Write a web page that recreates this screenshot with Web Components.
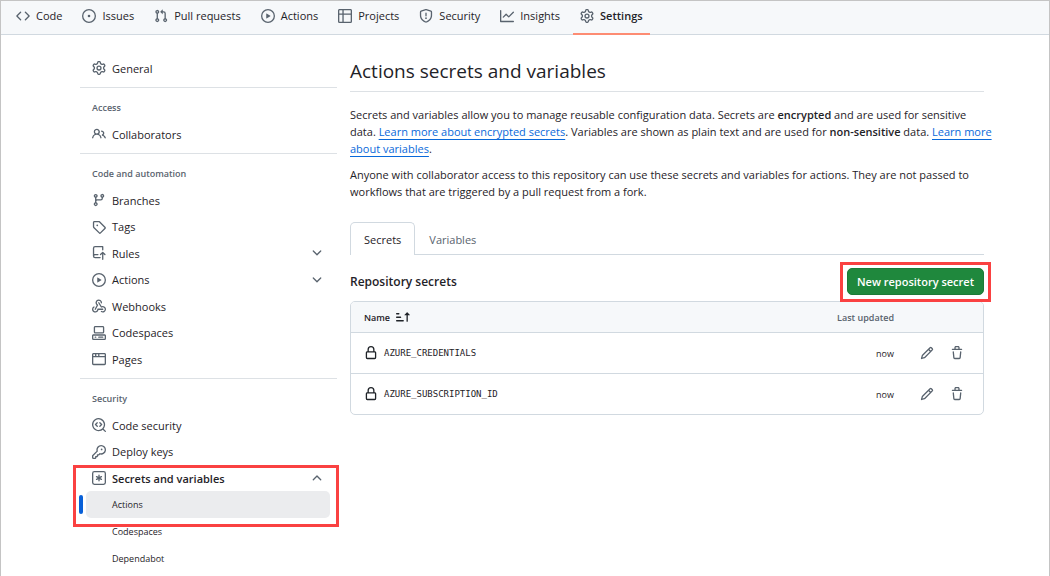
<!DOCTYPE html>
<html lang="en">
<head>
<meta charset="utf-8">
<meta name="viewport" content="width=device-width, initial-scale=1">
<title>Actions secrets and variables</title>
<style>
  :root {
    --fg: #1f2328;
    --muted: #59636e;
    --line: #d1d9e0;
    --subtle: #f6f8fa;
    --link: #0969da;
    --mark: #fa4141;
  }
  body {
    margin: 0;
    font: 11px/17px "Open Sans", "Noto Sans", sans-serif;
    color: var(--fg);
    background: #fff;
  }
</style>
</head>
<body>
<settings-page>
  <top-nav slot="top">
    <nav-tab icon="code">Code</nav-tab>
    <nav-tab icon="issue">Issues</nav-tab>
    <nav-tab icon="pull">Pull requests</nav-tab>
    <nav-tab icon="play">Actions</nav-tab>
    <nav-tab icon="table">Projects</nav-tab>
    <nav-tab icon="shield">Security</nav-tab>
    <nav-tab icon="graph">Insights</nav-tab>
    <nav-tab icon="gear" current>Settings</nav-tab>
  </top-nav>
  <side-nav slot="side">
    <side-group>
      <side-item icon="gear">General</side-item>
    </side-group>
    <side-group heading="Access">
      <side-item icon="people">Collaborators</side-item>
    </side-group>
    <side-group heading="Code and automation">
      <side-item icon="branch">Branches</side-item>
      <side-item icon="tag">Tags</side-item>
      <side-item icon="push" toggle="closed">Rules</side-item>
      <side-item icon="play" toggle="closed">Actions</side-item>
      <side-item icon="webhook">Webhooks</side-item>
      <side-item icon="codespaces">Codespaces</side-item>
      <side-item icon="browser">Pages</side-item>
    </side-group>
    <side-group heading="Security">
      <side-item icon="codescan">Code security</side-item>
      <side-item icon="key">Deploy keys</side-item>
      <mark-box class="wide">
        <side-item icon="asterisk" toggle="open">Secrets and variables</side-item>
        <side-item sub current>Actions</side-item>
      </mark-box>
      <side-item sub>Codespaces</side-item>
      <side-item sub>Dependabot</side-item>
    </side-group>
  </side-nav>
  <secrets-panel></secrets-panel>
</settings-page>

<script>
const ICONS = {
  code: 'M4.72 3.22a.75.75 0 0 1 1.06 1.06L2.06 8l3.72 3.72a.75.75 0 1 1-1.06 1.06L.47 8.53a.75.75 0 0 1 0-1.06zm6.56 0a.75.75 0 1 0-1.06 1.06L13.94 8l-3.72 3.72a.75.75 0 1 0 1.06 1.06l4.25-4.25a.75.75 0 0 0 0-1.06z',
  issue: 'M8 9.5a1.5 1.5 0 1 0 0-3 1.5 1.5 0 0 0 0 3ZM8 0a8 8 0 1 1 0 16A8 8 0 0 1 8 0ZM1.5 8a6.5 6.5 0 1 0 13 0 6.5 6.5 0 0 0-13 0Z',
  pull: 'M1.5 3.25a2.25 2.25 0 1 1 3 2.122v5.256a2.251 2.251 0 1 1-1.5 0V5.372A2.25 2.25 0 0 1 1.5 3.25Zm5.677-.177L9.573.677A.25.25 0 0 1 10 .854V2.5h1A2.5 2.5 0 0 1 13.5 5v5.628a2.251 2.251 0 1 1-1.5 0V5a1 1 0 0 0-1-1h-1v1.646a.25.25 0 0 1-.427.177L7.177 3.427a.25.25 0 0 1 0-.354ZM3.75 2.5a.75.75 0 1 0 0 1.5.75.75 0 0 0 0-1.5Zm0 9.5a.75.75 0 1 0 0 1.5.75.75 0 0 0 0-1.5Zm8.25.75a.75.75 0 1 0 1.5 0 .75.75 0 0 0-1.5 0Z',
  play: 'M8 0a8 8 0 1 1 0 16A8 8 0 0 1 8 0ZM1.5 8a6.5 6.5 0 1 0 13 0 6.5 6.5 0 0 0-13 0Zm4.879-2.773 4.264 2.559a.25.25 0 0 1 0 .428l-4.264 2.559A.25.25 0 0 1 6 10.559V5.442a.25.25 0 0 1 .379-.215Z',
  table: 'M0 1.75C0 .784.784 0 1.75 0h12.5C15.216 0 16 .784 16 1.75v12.5A1.75 1.75 0 0 1 14.25 16H1.75A1.75 1.75 0 0 1 0 14.25ZM6.5 6.5v8h7.75a.25.25 0 0 0 .25-.25V6.5Zm8-1.5V1.75a.25.25 0 0 0-.25-.25H6.5V5Zm-13 1.5v7.75c0 .138.112.25.25.25H5v-8ZM5 5V1.5H1.75a.25.25 0 0 0-.25.25V5Z',
  shield: 'M7.467.133a1.748 1.748 0 0 1 1.066 0l5.25 1.68A1.75 1.75 0 0 1 15 3.48V7c0 1.566-.32 3.182-1.303 4.682-.983 1.498-2.585 2.813-5.032 3.855a1.697 1.697 0 0 1-1.33 0c-2.447-1.042-4.049-2.357-5.032-3.855C1.32 10.182 1 8.566 1 7V3.48a1.75 1.75 0 0 1 1.217-1.667Zm.61 1.429a.25.25 0 0 0-.153 0l-5.25 1.68a.25.25 0 0 0-.174.238V7c0 1.358.275 2.666 1.057 3.86.784 1.194 2.121 2.34 4.366 3.297a.196.196 0 0 0 .154 0c2.245-.956 3.582-2.104 4.366-3.298C13.225 9.666 13.5 8.36 13.5 7V3.48a.251.251 0 0 0-.174-.237l-5.25-1.68ZM8.75 4.75v3a.75.75 0 0 1-1.5 0v-3a.75.75 0 0 1 1.5 0ZM9 10.5a1 1 0 1 1-2 0 1 1 0 0 1 2 0Z',
  graph: 'M1.5 1.75V13.5h13.75a.75.75 0 0 1 0 1.5H.75a.75.75 0 0 1-.75-.75V1.75a.75.75 0 0 1 1.5 0Zm14.28 2.53-5.25 5.25a.75.75 0 0 1-1.06 0L7 7.06 4.28 9.78a.751.751 0 0 1-1.042-.018.751.751 0 0 1-.018-1.042l3.25-3.25a.75.75 0 0 1 1.06 0L10 7.94l4.72-4.72a.751.751 0 0 1 1.042.018.751.751 0 0 1 .018 1.042Z',
  gear: 'M8 0a8.2 8.2 0 0 1 .701.031C9.444.095 9.99.645 10.16 1.29l.288 1.107c.018.066.079.158.212.224.231.114.454.243.668.386.123.082.233.09.299.071l1.103-.303c.644-.176 1.392.021 1.82.63.27.385.506.792.704 1.218.315.675.111 1.422-.364 1.891l-.814.806c-.049.048-.098.147-.088.294.016.257.016.515 0 .772-.01.147.038.246.088.294l.814.806c.475.469.679 1.216.364 1.891a7.977 7.977 0 0 1-.704 1.217c-.428.61-1.176.807-1.82.63l-1.102-.302c-.067-.019-.177-.011-.3.071a5.909 5.909 0 0 1-.668.386c-.133.066-.194.158-.211.224l-.29 1.106c-.168.646-.715 1.196-1.458 1.26a8.006 8.006 0 0 1-1.402 0c-.743-.064-1.289-.614-1.458-1.26l-.289-1.106c-.018-.066-.079-.158-.212-.224a5.738 5.738 0 0 1-.668-.386c-.123-.082-.233-.09-.299-.071l-1.103.303c-.644.176-1.392-.021-1.82-.63a8.12 8.12 0 0 1-.704-1.218c-.315-.675-.111-1.422.363-1.891l.815-.806c.05-.048.098-.147.088-.294a6.214 6.214 0 0 1 0-.772c.01-.147-.038-.246-.088-.294l-.815-.806C.635 6.045.431 5.298.746 4.623a7.92 7.92 0 0 1 .704-1.217c.428-.61 1.176-.807 1.82-.63l1.102.302c.067.019.177.011.3-.071.214-.143.437-.272.668-.386.133-.066.194-.158.211-.224l.29-1.106C6.009.645 6.556.095 7.299.03 7.53.01 7.764 0 8 0Zm-.571 1.525c-.036.003-.108.036-.137.146l-.289 1.105c-.147.561-.549.967-.998 1.189-.173.086-.34.183-.5.29-.417.278-.97.423-1.529.27l-1.103-.303c-.109-.03-.175.016-.195.045-.22.312-.412.644-.573.99-.014.031-.021.11.059.19l.815.806c.411.406.562.957.53 1.456a4.709 4.709 0 0 0 0 .582c.032.499-.119 1.05-.53 1.456l-.815.806c-.081.08-.073.159-.059.19.162.346.353.677.573.989.02.03.085.076.195.046l1.102-.303c.56-.153 1.113-.008 1.53.27.161.107.328.204.501.29.447.222.85.629.997 1.189l.289 1.105c.029.109.101.143.137.146a6.6 6.6 0 0 0 1.142 0c.036-.003.108-.036.137-.146l.289-1.105c.147-.561.549-.967.998-1.189.173-.086.34-.183.5-.29.417-.278.97-.423 1.529-.27l1.103.303c.109.029.175-.016.195-.045.22-.313.411-.644.573-.99.014-.031.021-.11-.059-.19l-.815-.806c-.411-.406-.562-.957-.53-1.456a4.709 4.709 0 0 0 0-.582c-.032-.499.119-1.05.53-1.456l.815-.806c.081-.08.073-.159.059-.19a6.464 6.464 0 0 0-.573-.989c-.02-.03-.085-.076-.195-.046l-1.102.303c-.56.153-1.113.008-1.53-.27a4.44 4.44 0 0 0-.501-.29c-.447-.222-.85-.629-.997-1.189l-.289-1.105c-.029-.11-.101-.143-.137-.146a6.6 6.6 0 0 0-1.142 0ZM11 8a3 3 0 1 1-6 0 3 3 0 0 1 6 0ZM9.5 8a1.5 1.5 0 1 0-3.001.001A1.5 1.5 0 0 0 9.5 8Z',
  people: 'M2 5.5a3.5 3.5 0 1 1 5.898 2.549 5.508 5.508 0 0 1 3.034 4.084.75.75 0 1 1-1.482.235 4 4 0 0 0-7.9 0 .75.75 0 0 1-1.482-.236A5.507 5.507 0 0 1 3.102 8.05 3.493 3.493 0 0 1 2 5.5ZM11 4a3.001 3.001 0 0 1 2.22 5.018 5.01 5.01 0 0 1 2.56 3.012.749.749 0 0 1-.885.954.752.752 0 0 1-.549-.514 3.507 3.507 0 0 0-2.522-2.372.75.75 0 0 1-.574-.73v-.352a.75.75 0 0 1 .416-.672A1.5 1.5 0 0 0 11 5.5.75.75 0 0 1 11 4Zm-5.5-.5a2 2 0 1 0-.001 3.999A2 2 0 0 0 5.5 3.5Z',
  branch: 'M9.5 3.25a2.25 2.25 0 1 1 3 2.122V6A2.5 2.5 0 0 1 10 8.5H6a1 1 0 0 0-1 1v1.128a2.251 2.251 0 1 1-1.5 0V5.372a2.25 2.25 0 1 1 1.5 0v1.836A2.493 2.493 0 0 1 6 7h4a1 1 0 0 0 1-1v-.628A2.25 2.25 0 0 1 9.5 3.25Zm-6 0a.75.75 0 1 0 1.5 0 .75.75 0 0 0-1.5 0Zm8.25-.75a.75.75 0 1 0 0 1.5.75.75 0 0 0 0-1.5ZM4.25 12a.75.75 0 1 0 0 1.5.75.75 0 0 0 0-1.5Z',
  tag: 'M1 7.775V2.75C1 1.784 1.784 1 2.75 1h5.025c.464 0 .91.184 1.238.513l6.25 6.25a1.75 1.75 0 0 1 0 2.474l-5.026 5.026a1.75 1.75 0 0 1-2.474 0l-6.25-6.25A1.752 1.752 0 0 1 1 7.775Zm1.5 0c0 .066.026.13.073.177l6.25 6.25a.25.25 0 0 0 .354 0l5.025-5.025a.25.25 0 0 0 0-.354l-6.25-6.25a.25.25 0 0 0-.177-.073H2.75a.25.25 0 0 0-.25.25ZM6 5a1 1 0 1 1 0 2 1 1 0 0 1 0-2Z',
  push: 'M1 2.5A2.5 2.5 0 0 1 3.5 0h8.75a.75.75 0 0 1 .75.75v3.5a.75.75 0 0 1-1.5 0V1.5h-8a1 1 0 0 0-1 1v6.708A2.493 2.493 0 0 1 3.5 9h3.25a.75.75 0 0 1 0 1.5H3.5a1 1 0 0 0 0 2h5.75a.75.75 0 0 1 0 1.5H3.5A2.5 2.5 0 0 1 1 11.5Zm13.23 7.79-1.224-1.224v6.184a.75.75 0 0 1-1.5 0V9.066L10.28 10.29a.75.75 0 0 1-1.06-1.061l2.505-2.504a.75.75 0 0 1 1.06 0L15.29 9.23a.751.751 0 0 1-.018 1.042.751.751 0 0 1-1.042.018Z',
  webhook: 'M5.5 4.25a2.25 2.25 0 0 1 4.5 0 .75.75 0 0 0 1.5 0 3.75 3.75 0 1 0-6.14 2.889l-2.272 4.258a.75.75 0 0 0 1.324.706L7 7.25a.75.75 0 0 0-.309-1.015A2.25 2.25 0 0 1 5.5 4.25ZM7.364 3.607a.75.75 0 0 1 1.03.257l2.608 4.349a3.75 3.75 0 1 1-.628 6.785.75.75 0 0 1 .752-1.299 2.25 2.25 0 1 0-.033-3.88.75.75 0 0 1-1.03-.256L7.107 4.636a.75.75 0 0 1 .257-1.03ZM2.9 8.776A.75.75 0 0 1 2.625 9.8 2.25 2.25 0 1 0 6 11.75a.75.75 0 0 1 .75-.751h5.5a.75.75 0 0 1 0 1.5H7.425a3.751 3.751 0 1 1-5.55-3.998.75.75 0 0 1 1.024.274Z',
  codespaces: 'M0 11.25c0-.966.784-1.75 1.75-1.75h12.5c.966 0 1.75.784 1.75 1.75v3A1.75 1.75 0 0 1 14.25 16H1.75A1.75 1.75 0 0 1 0 14.25Zm2-9.5C2 .784 2.784 0 3.75 0h8.5C13.216 0 14 .784 14 1.75v5a1.75 1.75 0 0 1-1.75 1.75h-8.5A1.75 1.75 0 0 1 2 6.75Zm1.75-.25a.25.25 0 0 0-.25.25v5c0 .138.112.25.25.25h8.5a.25.25 0 0 0 .25-.25v-5a.25.25 0 0 0-.25-.25Zm-2 9.5a.25.25 0 0 0-.25.25v3c0 .138.112.25.25.25h12.5a.25.25 0 0 0 .25-.25v-3a.25.25 0 0 0-.25-.25ZM7 12.75a.75.75 0 0 1 .75-.75h4.5a.75.75 0 0 1 0 1.5h-4.5a.75.75 0 0 1-.75-.75Zm-4 0a.75.75 0 0 1 .75-.75h.5a.75.75 0 0 1 0 1.5h-.5a.75.75 0 0 1-.75-.75Z',
  browser: 'M0 2.75C0 1.784.784 1 1.75 1h12.5c.966 0 1.75.784 1.75 1.75v10.5A1.75 1.75 0 0 1 14.25 15H1.75A1.75 1.75 0 0 1 0 13.25ZM14.5 6h-13v7.25c0 .138.112.25.25.25h12.5a.25.25 0 0 0 .25-.25Zm-6-3.5v2h6V2.75a.25.25 0 0 0-.25-.25ZM5 2.5v2h2v-2Zm-3.25 0a.25.25 0 0 0-.25.25V4.5h2v-2Z',
  codescan: 'M8.47 4.97a.75.75 0 0 0 0 1.06L9.94 7.5 8.47 8.97a.75.75 0 1 0 1.06 1.06l2-2a.75.75 0 0 0 0-1.06l-2-2a.75.75 0 0 0-1.06 0ZM6.53 6.03a.75.75 0 0 0-1.06-1.06l-2 2a.75.75 0 0 0 0 1.06l2 2a.75.75 0 1 0 1.06-1.06L5.06 7.5l1.47-1.47ZM12.246 13.307a7.501 7.501 0 1 1 1.06-1.06l2.474 2.473a.749.749 0 1 1-1.06 1.06l-2.474-2.473ZM1.5 7.5a6.002 6.002 0 0 0 3.608 5.504 6.002 6.002 0 0 0 6.486-1.117.748.748 0 0 1 .292-.293A6 6 0 1 0 1.5 7.5Z',
  key: 'M10.5 0a5.499 5.499 0 1 1-1.288 10.848l-.932.932a.749.749 0 0 1-.53.22H7v.75a.749.749 0 0 1-.22.53l-.5.5a.749.749 0 0 1-.53.22H5v.75a.749.749 0 0 1-.22.53l-.5.5a.749.749 0 0 1-.53.22h-2A1.75 1.75 0 0 1 0 14.25v-2c0-.199.079-.389.22-.53l4.932-4.932A5.5 5.5 0 0 1 10.5 0Zm-4 5.5c-.001.431.069.86.205 1.269a.75.75 0 0 1-.181.768L1.5 12.56v1.69c0 .138.112.25.25.25h1.69l.06-.06v-1.19a.75.75 0 0 1 .75-.75h1.19l.06-.06v-1.19a.75.75 0 0 1 .75-.75h1.19l1.023-1.025a.75.75 0 0 1 .768-.18A4 4 0 1 0 6.5 5.5ZM11 6a1 1 0 1 1 0-2 1 1 0 0 1 0 2Z',
  asterisk: 'M0 2.75A2.75 2.75 0 0 1 2.75 0h10.5A2.75 2.75 0 0 1 16 2.75v10.5A2.75 2.75 0 0 1 13.25 16H2.75A2.75 2.75 0 0 1 0 13.25ZM2.75 1.5c-.69 0-1.25.56-1.25 1.25v10.5c0 .69.56 1.25 1.25 1.25h10.5c.69 0 1.25-.56 1.25-1.25V2.75c0-.69-.56-1.25-1.25-1.25ZM8 4a.75.75 0 0 1 .75.75V6.7l1.69-.975a.75.75 0 0 1 .75 1.3L9.5 8l1.69.976a.75.75 0 0 1-.75 1.298L8.75 9.3v1.951a.75.75 0 0 1-1.5 0V9.299l-1.69.976a.75.75 0 0 1-.75-1.3L6.5 8l-1.69-.975a.75.75 0 0 1 .75-1.3l1.69.976V4.75A.75.75 0 0 1 8 4Z',
  lock: 'M4 4a4 4 0 0 1 8 0v2h.25c.966 0 1.75.784 1.75 1.75v5.5A1.75 1.75 0 0 1 12.25 15h-8.5A1.75 1.75 0 0 1 2 13.25v-5.5C2 6.784 2.784 6 3.75 6H4Zm8.25 3.5h-8.5a.25.25 0 0 0-.25.25v5.5c0 .138.112.25.25.25h8.5a.25.25 0 0 0 .25-.25v-5.5a.25.25 0 0 0-.25-.25ZM10.5 6V4a2.5 2.5 0 1 0-5 0v2Z',
  pencil: 'M11.013 1.427a1.75 1.75 0 0 1 2.474 0l1.086 1.086a1.75 1.75 0 0 1 0 2.474l-8.61 8.61c-.21.21-.47.364-.756.445l-3.251.93a.75.75 0 0 1-.927-.928l.929-3.25c.081-.286.235-.547.445-.758l8.61-8.61Zm.176 4.823L9.75 4.81l-6.286 6.287a.253.253 0 0 0-.064.108l-.558 1.953 1.953-.558a.253.253 0 0 0 .108-.064Zm1.238-3.763a.25.25 0 0 0-.354 0L10.811 3.75l1.439 1.44 1.263-1.263a.25.25 0 0 0 0-.354Z',
  trash: 'M11 1.75V3h2.25a.75.75 0 0 1 0 1.5H2.75a.75.75 0 0 1 0-1.5H5V1.75C5 .784 5.784 0 6.75 0h2.5C10.216 0 11 .784 11 1.75ZM4.496 6.675l.66 6.6a.25.25 0 0 0 .249.225h5.19a.25.25 0 0 0 .249-.225l.66-6.6a.75.75 0 0 1 1.492.149l-.66 6.6A1.748 1.748 0 0 1 10.595 15h-5.19a1.75 1.75 0 0 1-1.741-1.575l-.66-6.6a.75.75 0 1 1 1.492-.15ZM6.5 1.75V3h3V1.75a.25.25 0 0 0-.25-.25h-2.5a.25.25 0 0 0-.25.25Z',
  down: 'M12.78 5.22a.749.749 0 0 1 0 1.06l-4.25 4.25a.749.749 0 0 1-1.06 0L3.22 6.28a.749.749 0 1 1 1.06-1.06L8 8.939l3.72-3.719a.749.749 0 0 1 1.06 0Z',
  up: 'M3.22 10.53a.749.749 0 0 1 0-1.06l4.25-4.25a.749.749 0 0 1 1.06 0l4.25 4.25a.749.749 0 1 1-1.06 1.06L8 6.811 4.28 10.53a.749.749 0 0 1-1.06 0Z',
  sort: 'm12.927 2.573 3 3A.25.25 0 0 1 15.75 6H13.5v6.75a.75.75 0 0 1-1.5 0V6H9.75a.25.25 0 0 1-.177-.427l3-3a.25.25 0 0 1 .354 0ZM0 12.25a.75.75 0 0 1 .75-.75h7.5a.75.75 0 0 1 0 1.5H.75a.75.75 0 0 1-.75-.75Zm0-4a.75.75 0 0 1 .75-.75h4.5a.75.75 0 0 1 0 1.5H.75A.75.75 0 0 1 0 8.25Zm0-4a.75.75 0 0 1 .75-.75h2.5a.75.75 0 0 1 0 1.5H.75A.75.75 0 0 1 0 4.25Z'
};

/* Registers an element whose shadow root is filled from a render function. */
function define(name, render) {
  customElements.define(name, class extends HTMLElement {
    constructor() {
      super();
      this.attachShadow({ mode: 'open' });
    }
    connectedCallback() {
      this.shadowRoot.innerHTML = render(this);
    }
  });
}

define('ui-icon', el => `
  <style>
    :host { display: block; flex: none; width: 14px; height: 14px; color: var(--muted); }
    svg { display: block; width: 100%; height: 100%; fill: currentColor; }
  </style>
  <svg viewBox="0 0 16 16" aria-hidden="true"><path fill-rule="evenodd" d="${ICONS[el.getAttribute('name')]}"/></svg>`);

/* Red outline drawn over the content it wraps. */
define('mark-box', () => `
  <style>
    :host { display: block; position: relative; }
    :host::after {
      content: ""; position: absolute; inset: -6px -7px -7px;
      border: 3px solid var(--mark); pointer-events: none;
    }
    :host(.wide)::after { inset: 0 -2px -9px -7px; }
  </style>
  <slot></slot>`);

define('settings-page', () => `
  <style>
    :host { display: block; box-sizing: border-box; min-height: 100vh; border: 1px solid #c4c4c4; }
    .body {
      display: grid; grid-template-columns: 257px minmax(0, 1fr); gap: 13px;
      padding: 20px 65px 0 79px;
    }
  </style>
  <slot name="top"></slot>
  <div class="body"><slot name="side"></slot><slot></slot></div>`);

define('top-nav', () => `
  <style>
    :host { display: block; background: var(--subtle); border-bottom: 1px solid var(--line); }
    nav { display: flex; gap: 6px; padding: 0 8px; }
  </style>
  <nav aria-label="Repository"><slot></slot></nav>`);

define('nav-tab', el => `
  <style>
    :host { display: block; }
    a {
      display: flex; align-items: center; gap: 6px; height: 29px; padding: 0 7px 4px;
      color: inherit; text-decoration: none; white-space: nowrap; position: relative;
    }
    :host([current]) a { font-weight: 600; }
    :host([current]) a::after {
      content: ""; position: absolute; inset: auto 0 -1px; height: 2px; background: #fd8c73;
    }
  </style>
  <a href="#" ${el.hasAttribute('current') ? 'aria-current="page"' : ''}><ui-icon name="${el.getAttribute('icon')}"></ui-icon><span><slot></slot></span></a>`);

define('side-nav', () => `
  <style>:host { display: block; } nav { display: block; }</style>
  <nav aria-label="Settings"><slot></slot></nav>`);

define('side-group', el => `
  <style>
    :host { display: block; padding-bottom: 6px; }
    :host(:not(:first-child)) { border-top: 1px solid #dde1e5; padding-top: 7px; }
    h2 {
      margin: 0; padding-left: 12px; line-height: 26px;
      font-size: 9px; font-weight: 600; color: var(--muted);
    }
    ::slotted(side-item:nth-child(even)) { height: 27px; }
  </style>
  ${el.hasAttribute('heading') ? `<h2>${el.getAttribute('heading')}</h2>` : ''}
  <slot></slot>`);

define('side-item', el => {
  const toggle = el.getAttribute('toggle');
  const icon = el.getAttribute('icon');
  const inner = `${icon ? `<ui-icon name="${icon}"></ui-icon>` : ''}<span><slot></slot></span>`;
  return `
  <style>
    :host { display: flex; position: relative; height: 26px; }
    a, button {
      flex: 1; display: flex; align-items: center; gap: 6px;
      margin: 0 7px 0 6px; padding: 0 6px; border: 0; border-radius: 5px; background: none;
      font: inherit; color: inherit; text-align: left; text-decoration: none;
    }
    span { flex: 1; }
    :host([sub]) a { padding-left: 26px; font-size: 9px; }
    :host([toggle="open"]) button { font-weight: 600; }
    :host([current]) { height: 27px; }
    :host([current]) a { background: #ebecee; }
    :host([current])::before {
      content: ""; position: absolute; left: -1px; top: 4px; bottom: 4px; width: 4px;
      border-radius: 3px; background: #0860d8;
    }
  </style>
  ${toggle
    ? `<button type="button" aria-expanded="${toggle === 'open'}">${inner}<ui-icon name="${toggle === 'open' ? 'up' : 'down'}"></ui-icon></button>`
    : `<a href="#">${inner}</a>`}`;
});

define('secrets-panel', () => `
  <style>
    :host { display: block; }
    h1 {
      margin: 0 0 14px; padding-bottom: 4px; border-bottom: 1px solid #dde1e5;
      font-size: 19px; line-height: 32px; font-weight: 400;
    }
    p { margin: 0 -8px 9px 0; }
    strong { font-weight: 600; }
    p a { color: var(--link); text-underline-offset: 3px; }
    .tabs { display: flex; margin-top: 22px; border-bottom: 1px solid var(--line); }
    .tabs a {
      margin-bottom: -1px; padding: 8px 13px 7px; border: 1px solid transparent; border-bottom: 0;
      color: var(--muted); text-decoration: none;
    }
    .tabs a[aria-selected="true"] {
      color: var(--fg); background: #fff; border-color: var(--line); border-radius: 5px 5px 0 0;
    }
    header { display: flex; align-items: center; justify-content: space-between; margin: 13px 0 6px; }
    h2 { margin: 0; font-size: 12px; font-weight: 600; }
    button {
      display: block; height: 27px; padding: 0 9px; border: 1px solid #1c7a36; border-radius: 5px;
      background: #1f883d; color: #fff; font: inherit; font-weight: 600;
    }
  </style>
  <h1>Actions secrets and variables</h1>
  <p>Secrets and variables allow you to manage reusable configuration data. Secrets are <strong>encrypted</strong> and are used for sensitive data. <a href="#">Learn more about encrypted secrets</a>. Variables are shown as plain text and are used for <strong>non-sensitive</strong> data. <a href="#">Learn more about variables</a>.</p>
  <p>Anyone with collaborator access to this repository can use these secrets and variables for actions. They are not passed to workflows that are triggered by a pull request from a fork.</p>
  <div class="tabs" role="tablist">
    <a href="#" role="tab" aria-selected="true">Secrets</a>
    <a href="#" role="tab" aria-selected="false">Variables</a>
  </div>
  <header>
    <h2>Repository secrets</h2>
    <mark-box><button type="button">New repository secret</button></mark-box>
  </header>
  <secrets-table names="AZURE_CREDENTIALS AZURE_SUBSCRIPTION_ID"></secrets-table>`);

define('secrets-table', el => `
  <style>
    :host { display: block; border: 1px solid var(--line); border-radius: 5px; overflow: hidden; }
    table { width: 100%; border-collapse: collapse; }
    th { height: 30px; padding: 0; background: var(--subtle); font-size: 9px; font-weight: 600; text-align: left; }
    td { height: 40px; padding: 0; border-top: 1px solid var(--line); font-size: 9px; }
    tr > :first-child { padding-left: 13px; }
    tr > :nth-child(2) { width: 60px; text-align: right; white-space: nowrap; }
    th:nth-child(2) { color: var(--muted); }
    tr > :last-child { width: 89px; }
    .line { display: flex; align-items: center; gap: 6px; }
    .line ui-icon { color: var(--fg); }
    code { font: 9px/17px "DejaVu Sans Mono", "Liberation Mono", monospace; }
    .tools { display: flex; justify-content: flex-end; gap: 16px; padding-right: 19px; }
    .tools button { padding: 0; border: 0; background: none; }
  </style>
  <table>
    <thead><tr><th scope="col"><div class="line">Name<ui-icon name="sort"></ui-icon></div></th><th scope="col">Last updated</th><th></th></tr></thead>
    <tbody>
      ${el.getAttribute('names').split(' ').map(name => `
      <tr>
        <td><div class="line"><ui-icon name="lock"></ui-icon><code>${name}</code></div></td>
        <td>now</td>
        <td><div class="tools">
          <button type="button" aria-label="Edit ${name}"><ui-icon name="pencil"></ui-icon></button>
          <button type="button" aria-label="Delete ${name}"><ui-icon name="trash"></ui-icon></button>
        </div></td>
      </tr>`).join('')}
    </tbody>
  </table>`);
</script>
</body>
</html>
